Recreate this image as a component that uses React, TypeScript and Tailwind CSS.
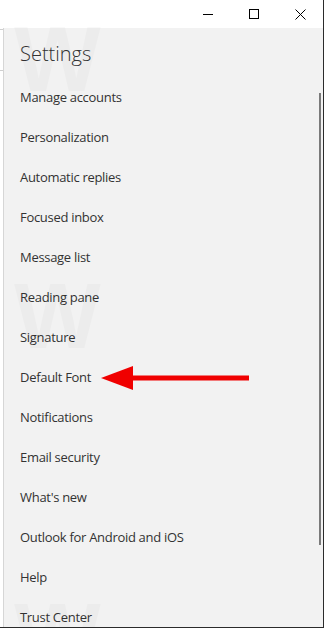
import React from 'react';

const items = [
  'Manage accounts',
  'Personalization',
  'Automatic replies',
  'Focused inbox',
  'Message list',
  'Reading pane',
  'Signature',
  'Default Font',
  'Notifications',
  'Email security',
  "What's new",
  'Outlook for Android and iOS',
  'Help',
  'Trust Center',
];

function Watermark({ top }: { top: number }) {
  return (
    <div className="pointer-events-none absolute left-0 right-0" style={{ top }}>
      <div className="absolute left-[14px] top-[-20px] text-[92px] font-bold leading-none text-black/[0.025] font-['Liberation_Sans',sans-serif]">
        W
      </div>
      <div className="absolute left-[80px] top-0 whitespace-nowrap text-[21px] font-bold leading-none text-black/[0.025] font-['DejaVu_Sans',sans-serif]">
        http://winaero.com
      </div>
    </div>
  );
}

export default function App() {
  return (
    <div className="relative flex h-[628px] w-[324px] flex-col overflow-hidden border-r border-b border-[#2b2b2b] bg-white font-['Open_Sans',sans-serif] text-[#333]">
      {/* title bar */}
      <div className="flex h-[28px] shrink-0 items-center justify-end">
        <button className="flex h-[28px] w-[46px] items-center justify-center">
          <span className="block h-px w-[10px] bg-black" />
        </button>
        <button className="flex h-[28px] w-[46px] items-center justify-center">
          <span className="block h-[10px] w-[10px] border border-black" />
        </button>
        <button className="flex h-[28px] w-[46px] items-center justify-center">
          <svg width="11" height="11" viewBox="0 0 11 11" stroke="#000" strokeWidth="1">
            <path d="M0.5 0.5 L10.5 10.5 M10.5 0.5 L0.5 10.5" />
          </svg>
        </button>
      </div>

      <div className="flex min-h-0 flex-1">
        {/* sliver of the window behind */}
        <div className="flex w-[3px] shrink-0 flex-col bg-white">
          <div className="mt-[1px] h-px bg-[#cfcfcf]" />
          <div className="mt-[40px] h-px bg-[#cfcfcf]" />
        </div>

        <div className="relative flex-1 border-l border-[#d6d6d6] bg-[#f2f2f2]">
          <h1 className="pl-[16px] pt-[13px] text-[20px] font-light leading-[26px] text-[#333]">Settings</h1>

          <ul className="mt-[11px] flex flex-col">
            {items.map((item) => (
              <li key={item} className="relative flex h-[40px] items-center pl-[16px] text-[13px] tracking-[-0.3px]">
                {item}
                {item === 'Default Font' && (
                  <svg
                    className="absolute left-[97px] top-[7px]"
                    width="150"
                    height="26"
                    viewBox="0 0 150 26"
                  >
                    <rect x="30" y="10.5" width="118" height="5" fill="#f00000" />
                    <polygon points="0,13 32,1 32,25" fill="#f00000" />
                  </svg>
                )}
              </li>
            ))}
          </ul>

          {/* scrollbar */}
          <div className="absolute right-[2px] top-[65px] h-[452px] w-[2px] bg-[#7a7a7a]" />
        </div>
      </div>

      <Watermark top={33} />
      <Watermark top={290} />
      <Watermark top={610} />
    </div>
  );
}
